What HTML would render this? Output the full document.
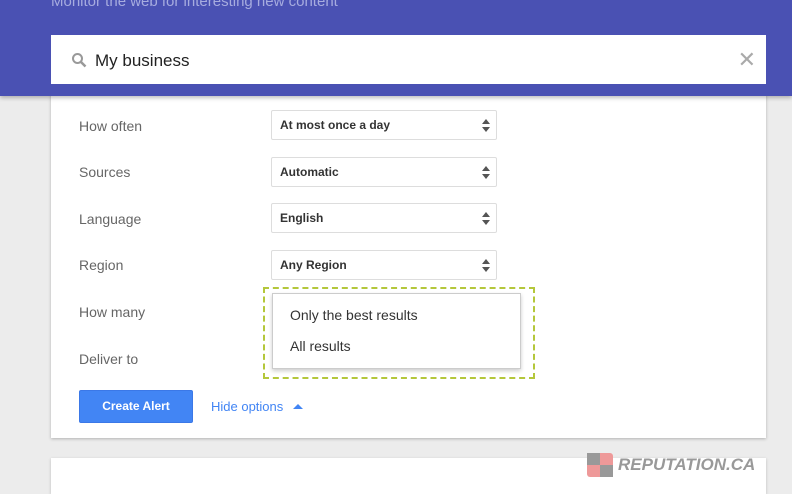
<!DOCTYPE html><html style="width:792px;height:494px;overflow:hidden"><head><style>
body{margin:0;width:792px;height:494px;background:#ececec;font-family:"Liberation Sans",Arial,sans-serif;position:relative;overflow:hidden}
.hdr{position:absolute;left:0;top:0;width:792px;height:96px;background:#4a51b3;box-shadow:0 2px 4px rgba(0,0,0,.25);z-index:2}
.sub{position:absolute;left:51px;top:-7px;color:#a7acdf;font-size:15px}
.search{position:absolute;left:51px;top:35px;width:715px;height:49px;background:#fff}
.search span{position:absolute;left:44px;top:16px;font-size:17px;color:#222}
.x{position:absolute;right:10px;top:12px;color:#aaa;font-size:22px}
.card{position:absolute;left:51px;top:84px;width:715px;height:354px;background:#fff;box-shadow:0 1px 3px rgba(0,0,0,.25)}
.card2{position:absolute;left:51px;top:458px;width:715px;height:36px;background:#fff;box-shadow:0 1px 3px rgba(0,0,0,.2)}
.l{position:absolute;left:79px;font-size:14px;color:#666}
.s{position:absolute;left:271px;width:226px;height:30px;border:1px solid #ddd;border-radius:2px;background:#fff;font-size:12px;font-weight:bold;color:#333;box-sizing:border-box;padding:7px 0 0 8px}
.s:after{content:"";position:absolute;right:6px;top:8px;border:4px solid transparent;border-bottom:5px solid #555;border-top:0}
.s:before{content:"";position:absolute;right:6px;top:16px;border:4px solid transparent;border-top:5px solid #555;border-bottom:0}
.dash{position:absolute;left:263px;top:287px;width:268px;height:88px;border:2px dashed #b4c73b;box-sizing:content-box}
.dd{position:absolute;left:272px;top:293px;width:249px;height:76px;background:#fff;border:1px solid #ccc;box-shadow:0 2px 4px rgba(0,0,0,.2);box-sizing:border-box;font-size:14px;color:#333}
.btn{position:absolute;left:79px;top:390px;width:114px;height:33px;background:#4285f4;border:1px solid #3b78e7;box-sizing:border-box;color:#fff;font-size:12px;font-weight:bold;text-align:center;line-height:31px;border-radius:2px}
</style></head><body>
<div class="hdr"><div class="sub">Monitor the web for interesting new content</div>
<div class="search"><svg style="position:absolute;left:20px;top:17px" width="16" height="16" viewBox="0 0 16 16"><circle cx="6.5" cy="6.5" r="4.5" fill="none" stroke="#999" stroke-width="2"/><path d="M10 10l4.5 4.5" stroke="#999" stroke-width="2.5"/></svg><span>My business</span><div class="x">✕</div></div></div>
<div class="card"></div><div class="card2"></div>
<div class="l" style="top:118px">How often</div><div class="s" style="top:110px">At most once a day</div>
<div class="l" style="top:164px">Sources</div><div class="s" style="top:157px">Automatic</div>
<div class="l" style="top:211px">Language</div><div class="s" style="top:203px">English</div>
<div class="l" style="top:257px">Region</div><div class="s" style="top:250px">Any Region</div>
<div class="l" style="top:304px">How many</div>
<div class="l" style="top:351px">Deliver to</div>
<div class="dash"></div>
<div class="dd"><div style="position:absolute;left:17px;top:13px">Only the best results</div><div style="position:absolute;left:17px;top:44px">All results</div></div>
<div class="btn">Create Alert</div>
<div style="position:absolute;left:211px;top:399px;font-size:13px;color:#4285f4">Hide options <span style="display:inline-block;margin-left:6px;border:5px solid transparent;border-bottom:5px solid #4285f4;border-top:0;vertical-align:2px"></span></div>
<div style="position:absolute;left:587px;top:453px;width:26px;height:24px;background:#e99;border-radius:3px"><div style="position:absolute;left:0;top:0;width:13px;height:12px;background:#999"></div><div style="position:absolute;left:13px;top:12px;width:13px;height:12px;background:#999"></div></div>
<div style="position:absolute;left:618px;top:455px;font-size:17px;font-weight:bold;font-style:italic;color:#999">REPUTATION.CA</div>
</body></html>
